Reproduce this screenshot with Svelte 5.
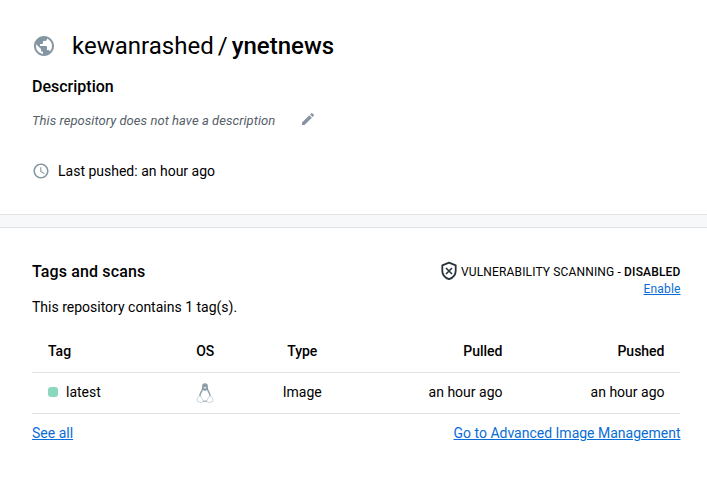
<script>
  const rows = [{ tag: 'latest', type: 'Image', pulled: 'an hour ago', pushed: 'an hour ago' }];
</script>

<main>
  <section class="summary">
    <h1>
      <svg class="globe" viewBox="0 0 24 24" width="24" height="24"><path d="M12 2C6.48 2 2 6.48 2 12s4.48 10 10 10 10-4.48 10-10S17.52 2 12 2zm-1 17.93c-3.95-.49-7-3.85-7-7.93 0-.62.08-1.21.21-1.79L9 15v1c0 1.1.9 2 2 2v1.93zm6.9-2.54c-.26-.81-1-1.39-1.9-1.39h-1v-3c0-.55-.45-1-1-1H8v-2h2c.55 0 1-.45 1-1V7h2c1.1 0 2-.9 2-2v-.41c2.93 1.19 5 4.06 5 7.41 0 2.08-.8 3.97-2.1 5.39z" /></svg>
      <span class="owner">kewanrashed</span><span class="slash">/</span><strong>ynetnews</strong>
    </h1>
    <h2>Description</h2>
    <div class="description">
      <em>This repository does not have a description</em>
      <svg class="pencil" viewBox="0 0 24 24" width="16" height="16"><path d="M3 17.25V21h3.75L17.81 9.94l-3.75-3.75L3 17.25zM20.71 7.04a1 1 0 0 0 0-1.41l-2.34-2.34a1 1 0 0 0-1.41 0l-1.83 1.83 3.75 3.75 1.83-1.83z" /></svg>
    </div>
    <div class="last">
      <svg class="clock" viewBox="0 0 24 24" width="18" height="18"><path d="M11.99 2C6.47 2 2 6.48 2 12s4.47 10 9.99 10C17.52 22 22 17.52 22 12S17.52 2 11.99 2zM12 20c-4.42 0-8-3.58-8-8s3.58-8 8-8 8 3.58 8 8-3.58 8-8 8zm.5-13H11v6l5.25 3.15.75-1.23-4.5-2.67z" /></svg>
      <span>Last pushed: an hour ago</span>
    </div>
  </section>

  <div class="band"></div>

  <section class="tags">
    <header>
      <div>
        <h2>Tags and scans</h2>
        <p>This repository contains 1 tag(s).</p>
      </div>
      <div class="scanning">
        <div class="status">
          <svg viewBox="0 0 18 20" width="18" height="20" fill="none" stroke="#27343b" stroke-width="1.8"><path d="M9 1.7 15.7 4.4V9.7C15.7 13.8 13 16.8 9 18.2 5 16.8 2.3 13.8 2.3 9.7V4.4Z" stroke-linejoin="round" /><path d="m6 7 6 6m0-6-6 6" stroke-width="1.6" /></svg>
          <span>VULNERABILITY SCANNING - <b>DISABLED</b></span>
        </div>
        <a href="#enable">Enable</a>
      </div>
    </header>

    <table>
      <thead>
        <tr><th class="tag">Tag</th><th class="os">OS</th><th class="type">Type</th><th class="pulled">Pulled</th><th class="pushed">Pushed</th></tr>
      </thead>
      <tbody>
        {#each rows as row}
          <tr>
            <td><div class="name"><i></i>{row.tag}</div></td>
            <td class="os">
              <svg class="tux" viewBox="0 0 18 22" width="18" height="22">
                <path d="M9 1.2C6.6 1.2 6 2.8 6.1 5 6.3 8.1 3.2 10.8 2.9 15.2L4.5 19.6h9l1.6-4.4C14.8 10.8 11.7 8.1 11.9 5c.1-2.2-.5-3.8-2.9-3.8Z" fill="#8c9da7" />
                <path d="M7 8.1 9 9l2-.9c.8 2.5 2.7 4 2.6 7-.1 2.8-1.6 4-4.6 4s-4.5-1.2-4.6-4C4.3 12.1 6.2 10.6 7 8.1Z" fill="#fff" />
                <path d="M7.4 5.4 9 4.8l1.6.6L9.5 6.6h-1Z" fill="#e3e9ec" />
                <path d="m3.4 13.9 1.5.9 2.2 3.6c.4 1.2-.5 2.2-1.9 2.2l-3.9-1-.3-1.9.6-2.2ZM14.6 13.9l-1.5.9-2.2 3.6c-.4 1.2.5 2.2 1.9 2.2l3.9-1 .3-1.9-.6-2.2Z" fill="#fff" stroke="#c1ccd2" stroke-width=".8" />
                <path d="M7 19.2h4" stroke="#9baab2" stroke-width=".9" />
              </svg>
            </td>
            <td class="type">{row.type}</td>
            <td class="pulled">{row.pulled}</td>
            <td class="pushed">{row.pushed}</td>
          </tr>
        {/each}
      </tbody>
    </table>
    <footer>
      <a href="#tags">See all</a>
      <a href="#management">Go to Advanced Image Management</a>
    </footer>
  </section>
</main>

<style>
  :global(body) { margin: 0; background: #fff; overflow: hidden; }
  main { height: 479px; font: 14px/20px Roboto, sans-serif; color: #000; }
  section { box-sizing: border-box; padding: 0 26.5px 0 32px; }
  svg { display: block; flex: none; }
  h1, h2, p { margin: 0; }
  .summary { height: 214px; padding-top: 30px; }
  h1 { display: flex; align-items: center; height: 32px; font-size: 24px; line-height: 32px; font-weight: 400; }
  .globe { margin-right: 16px; fill: #8496a1; }
  .owner { letter-spacing: 0.02px; }
  .slash { margin: 0 4px; }
  h1 strong { font-weight: 500; }
  h2 { font-size: 16px; line-height: 24px; font-weight: 500; }
  .summary h2 { margin-top: 13px; }
  .description { display: flex; align-items: center; height: 20px; margin-top: 12px; font-size: 13px; color: #556069; letter-spacing: 0.05px; }
  .pencil { margin: -4px 0 0 25px; fill: #8993a5; }
  .last { display: flex; align-items: center; height: 20px; margin-top: 30px; }
  .clock { margin-right: 8px; fill: #8496a1; }
  .band { box-sizing: border-box; height: 14px; background: #f7f8fa; border: solid #e1e2e6; border-width: 1px 0; }
  .tags { padding-top: 32px; }
  .tags h2 { letter-spacing: 0.13px; }
  header { display: flex; justify-content: space-between; height: 71px; }
  header p { margin-top: 13px; }
  .scanning { font-size: 12px; line-height: 16px; text-align: right; }
  .status { display: flex; align-items: center; gap: 3px; height: 24px; letter-spacing: 0.15px; }
  .status svg { margin-top: -2px; }
  .scanning b { font-weight: 500; letter-spacing: 0.16px; }
  .scanning a { display: block; width: fit-content; margin: -3px 0 0 auto; letter-spacing: 0.15px; }
  a { color: #086dd7; text-decoration: underline; }
  table { width: 648px; table-layout: fixed; border-collapse: separate; border-spacing: 0; }
  th, td { box-sizing: border-box; height: 41px; padding: 0 15.5px 2px 16px; border-bottom: 1px solid #e1e2e6; text-align: left; vertical-align: middle; }
  th { height: 42px; font-weight: 500; }
  th.tag { width: 140px; }
  th.os { width: 66px; }
  th.type { width: 128px; }
  th.pulled { width: 152px; }
  .os, .type { text-align: center; }
  .pulled, .pushed { text-align: right; }
  .name { display: flex; align-items: center; gap: 8px; }
  .name i { width: 10px; height: 10px; border-radius: 3px; background: #8bd7bf; }
  .tux { margin: 0 auto; transform: translateY(1px); }
  footer { display: flex; justify-content: space-between; padding-top: 9px; }
</style>
